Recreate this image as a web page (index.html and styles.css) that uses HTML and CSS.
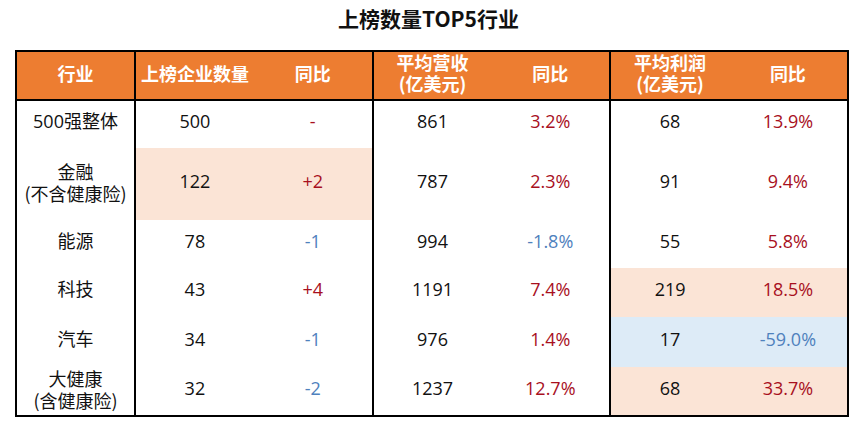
FILE: index.html
```html
<!DOCTYPE html>
<html lang="zh">
<head>
<meta charset="utf-8">
<title>上榜数量TOP5行业</title>
<link rel="stylesheet" href="styles.css">
</head>
<body>
<div class="page">
  <h1 class="title">上榜数量TOP5行业</h1>
  <table class="grid">
    <colgroup>
      <col class="c1"><col class="c2"><col class="c3"><col class="c4"><col class="c5"><col class="c6"><col class="c7">
    </colgroup>
    <thead>
      <tr class="head">
        <th class="sep">行业</th>
        <th>上榜企业数量</th>
        <th class="sep">同比</th>
        <th>平均营收<br>(亿美元)</th>
        <th class="sep">同比</th>
        <th>平均利润<br>(亿美元)</th>
        <th>同比</th>
      </tr>
    </thead>
    <tbody>
      <tr class="r1">
        <td class="sep">500强整体</td>
        <td>500</td>
        <td class="sep up">-</td>
        <td>861</td>
        <td class="sep up">3.2%</td>
        <td>68</td>
        <td class="up">13.9%</td>
      </tr>
      <tr class="r2">
        <td class="sep two">金融<br>(不含健康险)</td>
        <td class="peach">122</td>
        <td class="sep up peach">+2</td>
        <td>787</td>
        <td class="sep up">2.3%</td>
        <td>91</td>
        <td class="up">9.4%</td>
      </tr>
      <tr class="r3">
        <td class="sep">能源</td>
        <td>78</td>
        <td class="sep down">-1</td>
        <td>994</td>
        <td class="sep down">-1.8%</td>
        <td>55</td>
        <td class="up">5.8%</td>
      </tr>
      <tr class="r4">
        <td class="sep">科技</td>
        <td>43</td>
        <td class="sep up">+4</td>
        <td>1191</td>
        <td class="sep up">7.4%</td>
        <td class="peach">219</td>
        <td class="up peach">18.5%</td>
      </tr>
      <tr class="r5">
        <td class="sep">汽车</td>
        <td>34</td>
        <td class="sep down">-1</td>
        <td>976</td>
        <td class="sep up">1.4%</td>
        <td class="blue">17</td>
        <td class="down blue">-59.0%</td>
      </tr>
      <tr class="r6">
        <td class="sep two">大健康<br>(含健康险)</td>
        <td>32</td>
        <td class="sep down">-2</td>
        <td>1237</td>
        <td class="sep up">12.7%</td>
        <td class="peach">68</td>
        <td class="up peach">33.7%</td>
      </tr>
    </tbody>
  </table>
</div>
</body>
</html>
```

FILE: styles.css
```css
html, body {
  margin: 0;
  padding: 0;
  background: #ffffff;
}

.page {
  width: 857px;
  height: 426px;
  font-family: "Open Sans", "Noto Sans CJK SC", sans-serif;
  color: #111111;
}

.title {
  margin: 0;
  height: 50px;
  padding-top: 4px;
  box-sizing: border-box;
  text-align: center;
  font-family: "Noto Sans CJK SC", sans-serif;
  font-size: 21px;
  font-weight: 700;
  line-height: 28px;
  color: #111111;
}

.grid {
  margin-left: 15px;
  width: 832px;
  table-layout: fixed;
  border-collapse: collapse;
  border: 2px solid #000000;
}

.c1 { width: 119px; }
.c2, .c3, .c4, .c5, .c6, .c7 { width: 118.8px; }

.grid th,
.grid td {
  padding: 0;
  text-align: center;
  vertical-align: middle;
}

.head {
  height: 49px;
}

.head th {
  background: #ed7d31;
  color: #ffffff;
  font-family: "Noto Sans CJK SC", sans-serif;
  font-weight: 700;
  font-size: 18px;
  line-height: 21px;
  padding-bottom: 5px;
  border-bottom: 2px solid #000000;
}

.grid td {
  font-size: 18px;
  line-height: 21px;
  padding-bottom: 6px;
}

.grid td.two {
  font-family: "Noto Sans CJK SC", sans-serif;
  font-size: 18px;
  line-height: 22px;
  padding-bottom: 4px;
}

.grid td.sep,
.grid th.sep {
  border-right: 2px solid #000000;
}

.r1 { height: 48px; }
.r2 { height: 72px; }
.r3 { height: 48px; }
.r4 { height: 49px; }
.r5 { height: 50px; }
.r6 { height: 46px; }

.up { color: #a8101e; }
.down { color: #4f81bd; }

.peach { background: #fbe4d6; }
.blue { background: #ddebf7; }
```
